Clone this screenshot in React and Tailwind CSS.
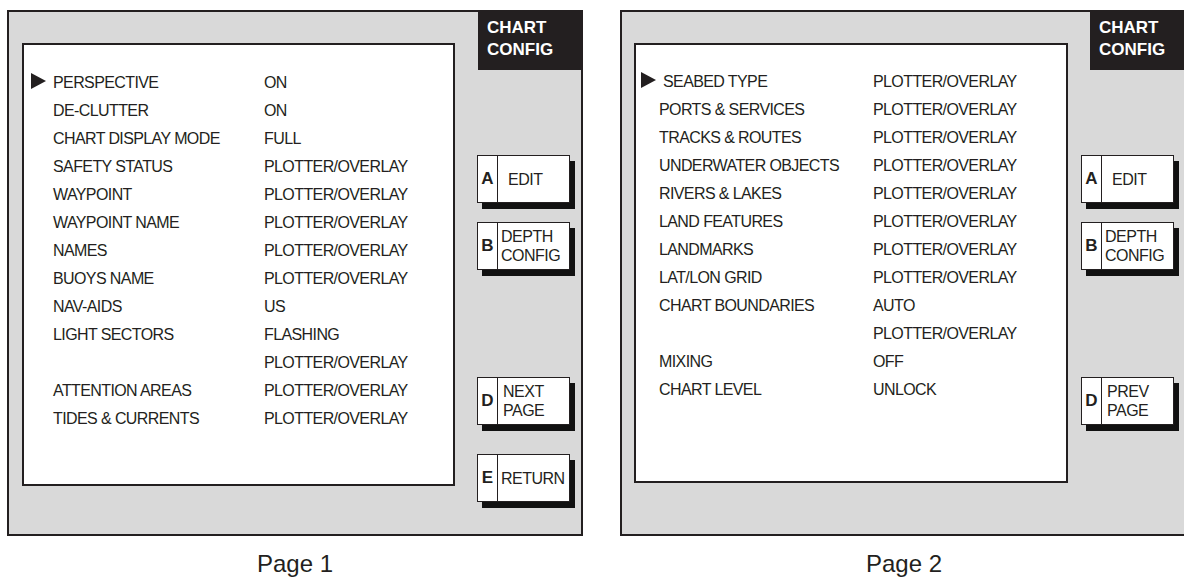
import React from "react";

const PAGE1 = [
  ["PERSPECTIVE", "ON"],
  ["DE-CLUTTER", "ON"],
  ["CHART DISPLAY MODE", "FULL"],
  ["SAFETY STATUS", "PLOTTER/OVERLAY"],
  ["WAYPOINT", "PLOTTER/OVERLAY"],
  ["WAYPOINT NAME", "PLOTTER/OVERLAY"],
  ["NAMES", "PLOTTER/OVERLAY"],
  ["BUOYS NAME", "PLOTTER/OVERLAY"],
  ["NAV-AIDS", "US"],
  ["LIGHT SECTORS", "FLASHING"],
  ["", "PLOTTER/OVERLAY"],
  ["ATTENTION AREAS", "PLOTTER/OVERLAY"],
  ["TIDES & CURRENTS", "PLOTTER/OVERLAY"],
];

const PAGE2 = [
  ["SEABED TYPE", "PLOTTER/OVERLAY"],
  ["PORTS & SERVICES", "PLOTTER/OVERLAY"],
  ["TRACKS & ROUTES", "PLOTTER/OVERLAY"],
  ["UNDERWATER OBJECTS", "PLOTTER/OVERLAY"],
  ["RIVERS & LAKES", "PLOTTER/OVERLAY"],
  ["LAND FEATURES", "PLOTTER/OVERLAY"],
  ["LANDMARKS", "PLOTTER/OVERLAY"],
  ["LAT/LON GRID", "PLOTTER/OVERLAY"],
  ["CHART BOUNDARIES", "AUTO"],
  ["", "PLOTTER/OVERLAY"],
  ["MIXING", "OFF"],
  ["CHART LEVEL", "UNLOCK"],
];

const Arrow = () => (
  <svg width="15" height="16" viewBox="0 0 15 16" className="-mt-[5px]">
    <polygon points="0,0 15,8 0,16" fill="#231f20" />
  </svg>
);

// soft key on the right edge of the screen
const SoftKey = ({ letter, children, textPad, className }) => (
  <div
    className={`flex w-[93px] h-[48px] bg-white border-[1.5px] border-[#231f20] shadow-[5px_6px_0_#111] ${className}`}
  >
    <div className="w-[20px] shrink-0 flex items-center justify-center border-r-[1.5px] border-[#231f20] font-bold text-[17px]">
      {letter}
    </div>
    <div className={`flex flex-col justify-center text-[16px] leading-[19px] tracking-[-0.5px] whitespace-nowrap ${textPad}`}>
      {children}
    </div>
  </div>
);

const TitleBox = ({ width }) => (
  <div className={`${width} h-[58px] bg-[#231f20] text-white font-bold text-[17px] leading-[22px] pl-[9px] pt-[5px]`}>
    <div>CHART</div>
    <div>CONFIG</div>
  </div>
);

export default function App() {
  return (
    <div
      className="w-[1184px] h-[578px] overflow-hidden bg-white flex gap-[37px] pt-[10px] pl-[7px] text-[#231f20]"
      style={{ fontFamily: '"Liberation Sans", Arial, sans-serif' }}
    >
      {/* Page 1 */}
      <div className="flex flex-col items-center shrink-0">
        <div className="w-[576px] h-[529px] border-2 border-[#231f20] bg-[#d9d9d9] flex">
          <div className="pl-[13px] pt-[31px]">
            <div className="w-[433px] h-[443px] border-2 border-[#231f20] bg-white pt-[24px] text-[16px] tracking-[-0.6px]">
              {PAGE1.map(([label, value], i) => (
                <div key={i} className="flex items-center h-[28px]">
                  <div className="w-[29px] pl-[7px] flex items-center">{i === 0 && <Arrow />}</div>
                  <div className="w-[211px] whitespace-nowrap">{label}</div>
                  <div className="whitespace-nowrap">{value}</div>
                </div>
              ))}
            </div>
          </div>
          <div className="flex-1 flex flex-col items-end">
            <TitleBox width="w-[103px]" />
            <div className="self-start ml-[22px] flex flex-col">
              <SoftKey letter="A" textPad="pl-[10px]" className="mt-[85px]">EDIT</SoftKey>
              <SoftKey letter="B" textPad="pl-[3px]" className="mt-[19px]">
                <span>DEPTH</span>
                <span>CONFIG</span>
              </SoftKey>
              <SoftKey letter="D" textPad="pl-[5px]" className="mt-[107px]">
                <span>NEXT</span>
                <span>PAGE</span>
              </SoftKey>
              <SoftKey letter="E" textPad="pl-[3px]" className="mt-[29px]">RETURN</SoftKey>
            </div>
          </div>
        </div>
        <div className="mt-[14px] text-[24px] leading-[28px]">Page 1</div>
      </div>

      {/* Page 2 */}
      <div className="flex flex-col items-center shrink-0">
        <div className="w-[568px] h-[529px] border-2 border-[#231f20] bg-[#d9d9d9] flex">
          <div className="pl-[12px] pt-[31px]">
            <div className="w-[434px] h-[440px] border-2 border-[#231f20] bg-white pt-[23px] text-[16px] tracking-[-0.6px]">
              {PAGE2.map(([label, value], i) => (
                <div key={i} className="flex items-center h-[28px]">
                  <div className="w-[23px] pl-[5px] flex items-center">{i === 0 && <Arrow />}</div>
                  <div className={`w-[214px] whitespace-nowrap ${i === 0 ? "pl-[4px]" : ""}`}>{label}</div>
                  <div className="whitespace-nowrap">{value}</div>
                </div>
              ))}
            </div>
          </div>
          <div className="flex-1 flex flex-col items-end">
            <TitleBox width="w-[96px]" />
            <div className="self-start ml-[13px] flex flex-col">
              <SoftKey letter="A" textPad="pl-[10px]" className="mt-[85px]">EDIT</SoftKey>
              <SoftKey letter="B" textPad="pl-[3px]" className="mt-[19px]">
                <span>DEPTH</span>
                <span>CONFIG</span>
              </SoftKey>
              <SoftKey letter="D" textPad="pl-[5px]" className="mt-[107px]">
                <span>PREV</span>
                <span>PAGE</span>
              </SoftKey>
            </div>
          </div>
        </div>
        <div className="mt-[14px] text-[24px] leading-[28px]">Page 2</div>
      </div>
    </div>
  );
}
